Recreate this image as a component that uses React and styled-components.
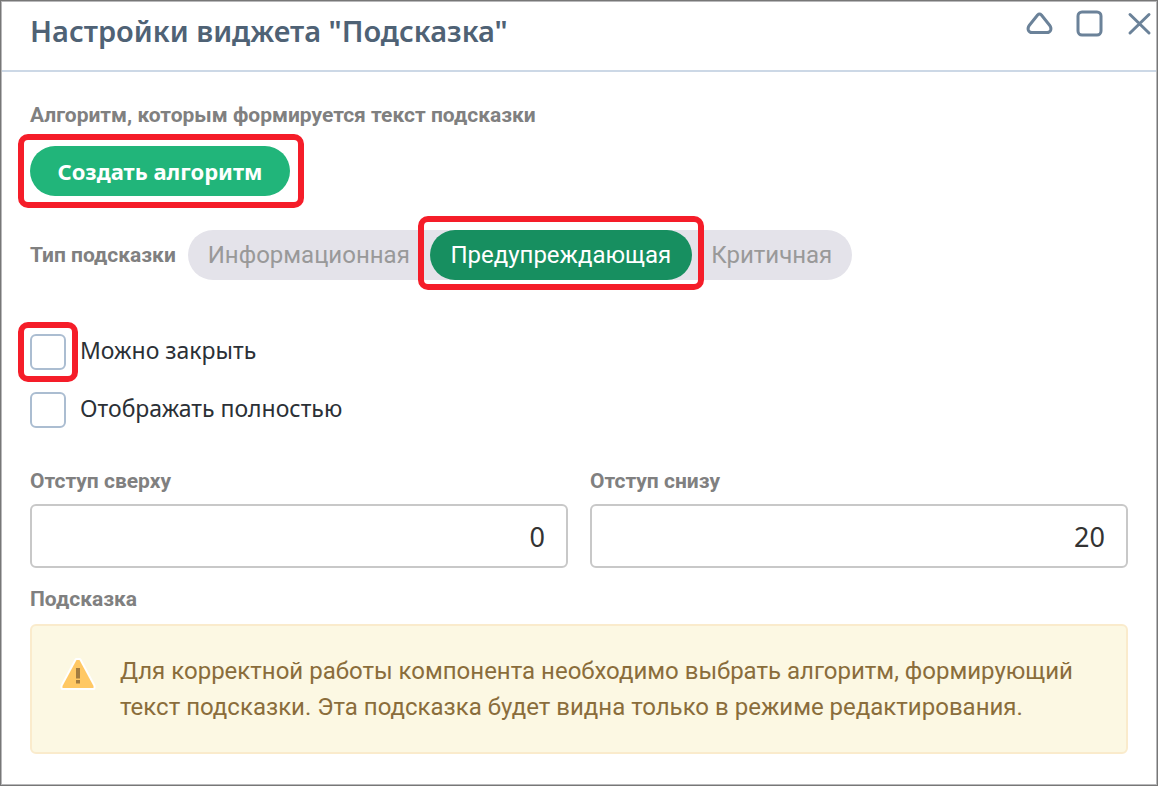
import React, { useState } from "react";
import styled, { createGlobalStyle, css } from "styled-components";

const GlobalStyle = createGlobalStyle`
  *, *::before, *::after { box-sizing: border-box; }
  body { margin: 0; background: #fff; font-family: "Noto Sans", sans-serif; }
`;

const Dialog = styled.main`
  min-height: 100vh;
  padding: 1px;
  border: 1px solid #777;
  box-shadow: inset 0 0 0 1px #b8b8ba;
  background: #fff;
`;

const Header = styled.header`
  display: flex;
  align-items: flex-start;
  justify-content: space-between;
  height: 70px;
  padding: 8px 2px 0 28px;
  border-bottom: 2px solid #ccd8e6;
`;

const Title = styled.h1`
  margin: 0;
  color: #4f6275;
  font-size: 29px;
  font-weight: 600;
  line-height: 42px;
`;

const WindowButtons = styled.div`
  display: flex;
  gap: 20px;
`;

const IconButton = styled.button`
  display: block;
  width: 30px;
  height: 30px;
  padding: 0;
  border: 0;
  background: none;
  color: #6b8299;

  svg { display: block; }
`;

const Form = styled.form`
  display: flex;
  flex-direction: column;
  padding: 28px 28px 30px;
`;

const labelText = css`
  color: #808080;
  font-family: Roboto, sans-serif;
  font-size: 21px;
  font-weight: 700;
  line-height: 30px;
`;

const Caption = styled.span`
  ${labelText}
`;

const FieldLabel = styled.label`
  ${labelText}
`;

const Marked = styled.div`
  position: relative;
  align-self: flex-start;

  &::after {
    content: "";
    position: absolute;
    inset: ${(p) => p.$inset || "-12px"};
    border: 6px solid #f51d29;
    border-radius: 10px;
    pointer-events: none;
  }
`;

const PrimaryButton = styled.button`
  display: block;
  height: 50px;
  min-width: 260px;
  padding: 0 24px;
  border: 0;
  border-radius: 25px;
  background: #21b57a;
  color: #fff;
  font-family: "Noto Sans", sans-serif;
  font-size: 22px;
  font-weight: 700;
`;

const AlgorithmRow = styled.div`
  display: flex;
  flex-direction: column;
  gap: 16px;
`;

const TypeRow = styled.div`
  display: flex;
  align-items: center;
  gap: 12px;
  margin-top: 34px;
`;

const Segments = styled.div`
  display: grid;
  grid-template-columns: 242px 262px 160px;
  border-radius: 25px;
  background: #e4e3ea;
`;

const Segment = styled.label`
  position: relative;
  display: flex;
  align-items: center;
  justify-content: center;
  height: 50px;
  border-radius: 25px;
  background: ${(p) => (p.$active ? "#178f60" : "transparent")};
  color: ${(p) => (p.$active ? "#fff" : "#999")};
  font-family: Roboto, sans-serif;
  font-size: 24px;

  ${(p) =>
    p.$active &&
    css`
      &::after {
        content: "";
        position: absolute;
        inset: -14px -12px -10px;
        border: 6px solid #f51d29;
        border-radius: 10px;
        pointer-events: none;
      }
    `}
`;

const HiddenRadio = styled.input`
  position: absolute;
  opacity: 0;
  margin: 0;
`;

const Checks = styled.div`
  display: flex;
  flex-direction: column;
  gap: 22px;
  margin-top: 54px;
`;

const CheckRow = styled.div`
  display: flex;
  align-items: flex-start;
  gap: 14px;
`;

const Checkbox = styled.input`
  display: block;
  appearance: none;
  width: 36px;
  height: 36px;
  margin: 0;
  border: 2px solid #abbdd1;
  border-radius: 6px;
  background: #fff;

  &:checked { background: #21b57a; }
`;

const CheckLabel = styled.label`
  color: #2b3036;
  font-size: 23px;
  line-height: 32px;
`;

const Fields = styled.div`
  display: grid;
  grid-template-columns: 1fr 1fr;
  gap: 22px;
  margin-top: 38px;
`;

const Field = styled.div`
  display: flex;
  flex-direction: column;
  gap: 8px;
`;

const NumberInput = styled.input`
  width: 100%;
  height: 64px;
  padding: 0 21px;
  border: 2px solid #c8c8c8;
  border-radius: 6px;
  background: #fff;
  color: #333;
  font-family: "Noto Sans", sans-serif;
  font-size: 27px;
  text-align: right;
`;

const Preview = styled.section`
  display: flex;
  flex-direction: column;
  gap: 10px;
  margin-top: 16px;
`;

const Alert = styled.div`
  display: flex;
  align-items: flex-start;
  gap: 24px;
  padding: 27px 30px;
  border: 2px solid #faebcc;
  border-radius: 6px;
  background: #fcf8e3;
`;

const WarningIcon = styled.svg`
  flex: none;
  margin-top: 3px;
  overflow: visible;
`;

const AlertText = styled.p`
  margin: 0;
  color: #8a6d3b;
  font-family: Roboto, sans-serif;
  font-size: 24px;
  line-height: 36px;
`;

const stroke = {
  fill: "none",
  stroke: "currentColor",
  strokeWidth: 3,
  strokeLinecap: "round",
  strokeLinejoin: "round",
};

const types = ["Информационная", "Предупреждающая", "Критичная"];

export default function App() {
  const [type, setType] = useState(types[1]);
  return (
    <Dialog>
      <GlobalStyle />
      <Header>
        <Title>Настройки виджета "Подсказка"</Title>
        <WindowButtons>
          <IconButton type="button" aria-label="Свернуть">
            <svg width="30" height="30" viewBox="0 0 30 30" {...stroke}>
              <path d="M13.6 5Q15.5 3 17.4 5L25.6 15.2Q27.6 18 26.6 20.4Q25.6 22.6 23 22.6H8Q5.4 22.6 4.4 20.4Q3.4 18 5.4 15.2Z" />
            </svg>
          </IconButton>
          <IconButton type="button" aria-label="Развернуть">
            <svg width="30" height="30" viewBox="0 0 30 30" {...stroke}>
              <rect x="4" y="2" width="23" height="23" rx="4" />
            </svg>
          </IconButton>
          <IconButton type="button" aria-label="Закрыть">
            <svg width="30" height="30" viewBox="0 0 30 30" {...stroke}>
              <path d="M6 4.5L25 23M25 4.5L6 23" />
            </svg>
          </IconButton>
        </WindowButtons>
      </Header>
      <Form>
        <AlgorithmRow>
          <Caption>Алгоритм, которым формируется текст подсказки</Caption>
          <Marked $inset="-12px -14px -12px -12px">
            <PrimaryButton type="button">Создать алгоритм</PrimaryButton>
          </Marked>
        </AlgorithmRow>
        <TypeRow role="radiogroup" aria-labelledby="type-caption">
          <Caption id="type-caption">Тип подсказки</Caption>
          <Segments>
            {types.map((name) => (
              <Segment key={name} $active={name === type}>
                <HiddenRadio
                  type="radio"
                  name="type"
                  checked={name === type}
                  onChange={() => setType(name)}
                />
                {name}
              </Segment>
            ))}
          </Segments>
        </TypeRow>
        <Checks>
          <CheckRow>
            <Marked>
              <Checkbox type="checkbox" id="closable" />
            </Marked>
            <CheckLabel htmlFor="closable">Можно закрыть</CheckLabel>
          </CheckRow>
          <CheckRow>
            <Checkbox type="checkbox" id="full" />
            <CheckLabel htmlFor="full">Отображать полностью</CheckLabel>
          </CheckRow>
        </Checks>
        <Fields>
          <Field>
            <FieldLabel htmlFor="top">Отступ сверху</FieldLabel>
            <NumberInput id="top" inputMode="numeric" defaultValue="0" />
          </Field>
          <Field>
            <FieldLabel htmlFor="bottom">Отступ снизу</FieldLabel>
            <NumberInput id="bottom" inputMode="numeric" defaultValue="20" />
          </Field>
        </Fields>
        <Preview>
          <Caption>Подсказка</Caption>
          <Alert role="note">
            <WarningIcon width="34" height="34" viewBox="0 0 34 34">
              <path
                d="M14.5 4H17.5L31.5 30V32H0.5V30Z"
                fill="#ffc864"
                stroke="#fff"
                strokeWidth="4"
                strokeLinejoin="round"
                paintOrder="stroke"
              />
              <path d="M16 12V22.5M16 24V27.5" stroke="#a37c40" strokeWidth="4" />
            </WarningIcon>
            <AlertText>
              Для корректной работы компонента необходимо выбрать алгоритм, формирующий текст
              подсказки. Эта подсказка будет видна только в режиме редактирования.
            </AlertText>
          </Alert>
        </Preview>
      </Form>
    </Dialog>
  );
}
